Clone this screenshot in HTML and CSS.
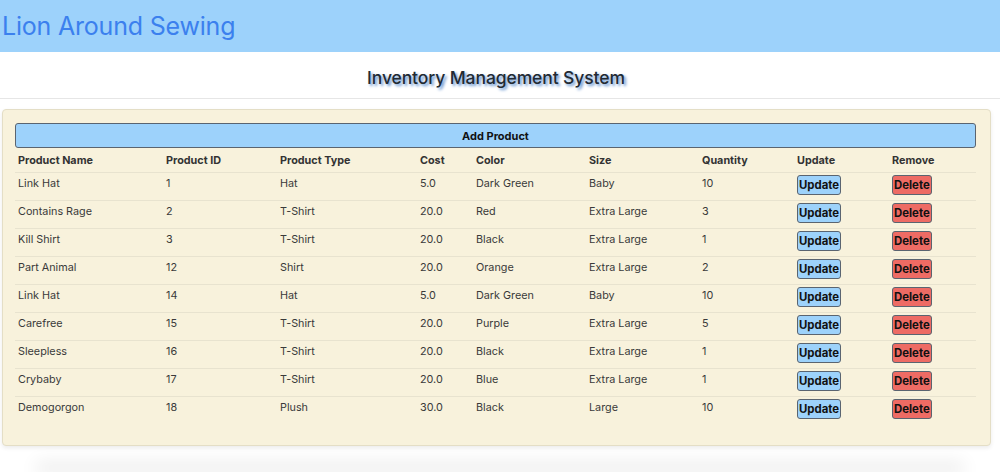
FILE: index.html
```html
<!DOCTYPE html>
<html lang="en">
<head>
<meta charset="utf-8">
<title>Lion Around Sewing</title>
<link rel="stylesheet" href="styles.css">
</head>
<body>
<header class="topbar">
  <h1 class="brand">Lion Around Sewing</h1>
</header>
<div class="subhead">
  <h2 class="subtitle">Inventory Management System</h2>
</div>
<main class="card">
  <button class="add-btn">Add Product</button>
  <table class="inv">
    <colgroup>
      <col style="width:148px"><col style="width:114px"><col style="width:140px"><col style="width:56px"><col style="width:113px"><col style="width:113px"><col style="width:95px"><col style="width:95px"><col style="width:87px">
    </colgroup>
    <thead>
      <tr><th>Product Name</th><th>Product ID</th><th>Product Type</th><th>Cost</th><th>Color</th><th>Size</th><th>Quantity</th><th>Update</th><th>Remove</th></tr>
    </thead>
    <tbody>
      <tr><td>Link Hat</td><td>1</td><td>Hat</td><td>5.0</td><td>Dark Green</td><td>Baby</td><td>10</td><td><button class="btn upd">Update</button></td><td><button class="btn del">Delete</button></td></tr>
      <tr><td>Contains Rage</td><td>2</td><td>T-Shirt</td><td>20.0</td><td>Red</td><td>Extra Large</td><td>3</td><td><button class="btn upd">Update</button></td><td><button class="btn del">Delete</button></td></tr>
      <tr><td>Kill Shirt</td><td>3</td><td>T-Shirt</td><td>20.0</td><td>Black</td><td>Extra Large</td><td>1</td><td><button class="btn upd">Update</button></td><td><button class="btn del">Delete</button></td></tr>
      <tr><td>Part Animal</td><td>12</td><td>Shirt</td><td>20.0</td><td>Orange</td><td>Extra Large</td><td>2</td><td><button class="btn upd">Update</button></td><td><button class="btn del">Delete</button></td></tr>
      <tr><td>Link Hat</td><td>14</td><td>Hat</td><td>5.0</td><td>Dark Green</td><td>Baby</td><td>10</td><td><button class="btn upd">Update</button></td><td><button class="btn del">Delete</button></td></tr>
      <tr><td>Carefree</td><td>15</td><td>T-Shirt</td><td>20.0</td><td>Purple</td><td>Extra Large</td><td>5</td><td><button class="btn upd">Update</button></td><td><button class="btn del">Delete</button></td></tr>
      <tr><td>Sleepless</td><td>16</td><td>T-Shirt</td><td>20.0</td><td>Black</td><td>Extra Large</td><td>1</td><td><button class="btn upd">Update</button></td><td><button class="btn del">Delete</button></td></tr>
      <tr><td>Crybaby</td><td>17</td><td>T-Shirt</td><td>20.0</td><td>Blue</td><td>Extra Large</td><td>1</td><td><button class="btn upd">Update</button></td><td><button class="btn del">Delete</button></td></tr>
      <tr><td>Demogorgon</td><td>18</td><td>Plush</td><td>30.0</td><td>Black</td><td>Large</td><td>10</td><td><button class="btn upd">Update</button></td><td><button class="btn del">Delete</button></td></tr>
    </tbody>
  </table>
</main>
<div class="footer-shadow"></div>
</body>
</html>
```
FILE: styles.css
```css
* { box-sizing: border-box; }
html, body { margin: 0; padding: 0; background: #fff; }
body {
  font-family: Inter, "Liberation Sans", Arial, sans-serif;
  color: #333;
  overflow: hidden;
  height: 472px;
}
.topbar {
  background: #9dd2fb;
  height: 52px;
  display: flex;
  align-items: center;
  padding-left: 2px;
}
.brand {
  margin: 0;
  font-size: 25px;
  font-weight: 400;
  color: #3b80ee;
  letter-spacing: -0.2px;
}
.subhead {
  height: 47px;
  border-bottom: 1px solid #e6e6e6;
  display: flex;
  align-items: center;
  justify-content: center;
  padding-top: 4px;
}
.subtitle {
  margin: 0;
  font-size: 17.5px;
  font-weight: 500;
  color: #222a33;
  text-shadow: 2px 2px 3px #5a8ccc;
  padding-right: 8px;
  letter-spacing: -0.1px;
}
.card {
  margin: 10px 9px 0 2px;
  background: #f8f2dc;
  border: 1px solid #e4dec6;
  border-radius: 4px;
  box-shadow: 0 2px 4px rgba(0,0,0,0.08);
  padding: 13px 14px 21px 12px;
}
.add-btn {
  display: block;
  width: 100%;
  height: 25px;
  background: #9dd2fb;
  border: 1px solid #5a6470;
  border-radius: 3px;
  font-family: inherit;
  font-size: 11px;
  font-weight: 700;
  color: #111;
  padding: 0;
}
.inv {
  width: 961px;
  border-collapse: collapse;
  table-layout: fixed;
  font-size: 10.8px;
}
.inv th, .inv td {
  text-align: left;
  vertical-align: top;
  padding: 5px 3px 0 3px;
  line-height: 16px;
}
.inv th {
  font-weight: 700;
  color: #333;
  height: 24px;
}
.inv td {
  height: 28px;
  padding-top: 3px;
  border-top: 1px solid #e8e3cf;
  color: #3a3a3a;
}
.btn {
  font-family: inherit;
  font-size: 11.4px;
  font-weight: 700;
  color: #111;
  height: 20px;
  padding: 0 1px;
  border: 1px solid #5a6470;
  border-radius: 3px;
  line-height: 18px;
  margin-top: -1px;
}
.upd { background: #9dd2fb; }
.del { background: #ee6b64; }
.footer-shadow {
  margin: 26px 40px 0 40px;
  height: 0;
  background: #fff;
  box-shadow: 0 -4px 18px 4px rgba(0,0,0,0.12);
}
```
